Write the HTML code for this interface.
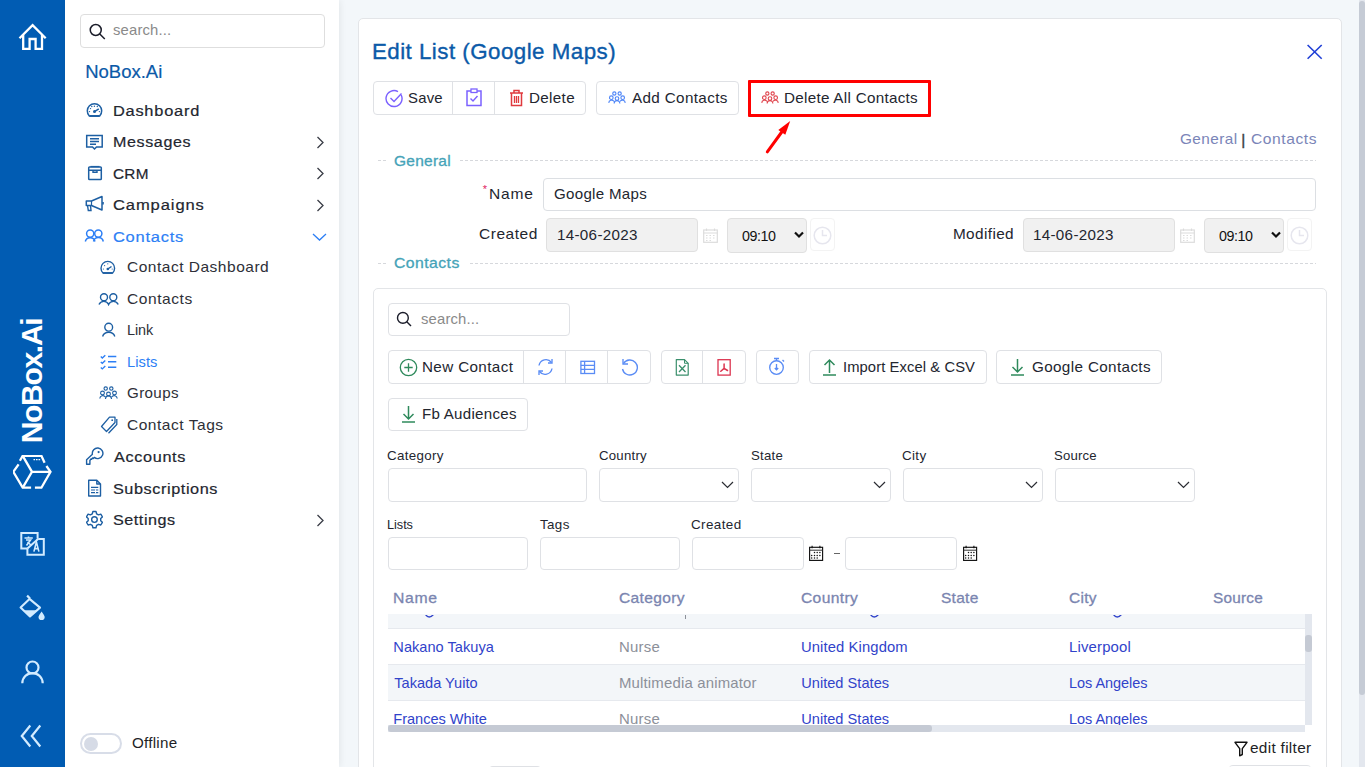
<!DOCTYPE html><html><head><meta charset="utf-8"><style>
html,body{margin:0;padding:0;width:1365px;height:767px;overflow:hidden;background:#f3f7fa;}
body{position:relative;font-family:"Liberation Sans",sans-serif;}
.t{position:absolute;white-space:nowrap;}
.b{position:absolute;}
</style></head><body>
<div class="b" style="left:0px;top:0px;width:65px;height:767px;background:#015cb3"></div>
<div class="b" style="left:65px;top:0px;width:274px;height:767px;background:#fff;box-shadow:1px 0 7px rgba(0,0,0,0.07)"></div>
<div class="b" style="left:1359px;top:0px;width:6px;height:767px;background:#e3e7ee"></div>
<div class="b" style="left:1359px;top:1px;width:6px;height:694px;background:#c5cbd5;border-radius:3px"></div>
<svg class="b" style="left:17px;top:22px;" width="31" height="30" viewBox="0 0 31 30" fill="none"><path d="M2.5 16.2 L15.6 3.2 L28.7 16.2 M6.2 12.8 V26.8 H12.6 V17 H18.6 V26.8 H25 V12.8" stroke="#fff" stroke-width="2.3" stroke-linejoin="miter"/></svg>
<div class="t" style="left:31.5px;top:380.5px;font-size:30px;line-height:30px;color:#fff;font-weight:bold;transform:translate(-50%,-50%) rotate(-90deg);letter-spacing:-1.3px;white-space:nowrap">NoBox.Ai</div>
<svg class="b" style="left:13px;top:455px;" width="39" height="34" viewBox="0 0 39 34" fill="none"><path d="M6.9 5.8 L9.7 0.8 H28.4 L31.6 7.7 M33.4 11 L37.5 16.8 L28.4 32.7 H21.9 M18.1 32.7 H9.7 L0.3 16.8 L5.6 9.3" stroke="#fff" stroke-width="2.3" stroke-linejoin="miter"/><path d="M9.7 0.8 L19 16.8 L9.7 32.7 M19 16.8 H37.5" stroke="#fff" stroke-width="2.3"/><path d="M20.5 4.6 h1.6 M23 4.6 h1.6 M25.5 4.6 h1.6" stroke="#fff" stroke-width="1.3"/></svg>
<svg class="b" style="left:19px;top:531px;" width="27" height="26" viewBox="0 0 27 26" fill="none"><path d="M8.6 17.5 H2.3 V2.1 H18.6 V7.6" stroke="#d2ebff" stroke-width="2"/><path d="M19.4 8 H24.8 V23.8 H8.4 V17.5" stroke="#d2ebff" stroke-width="2"/><path d="M8.4 17.5 L19.6 7.6" stroke="#d2ebff" stroke-width="2"/><path d="M5.5 7 H13.8 M9.5 5.5 V7 M7 9 L11.5 9 L7.5 14.5 M8.5 11 L12.5 14.5" stroke="#d2ebff" stroke-width="1.6"/><path d="M14.9 20.6 L17.4 11 L19.9 20.6 M15.8 17.6 H19" stroke="#d2ebff" stroke-width="1.6"/></svg>
<svg class="b" style="left:19px;top:594px;" width="28" height="28" viewBox="0 0 28 28" fill="none"><path d="M8.1 1.6 L11 4.5" stroke="#d2ebff" stroke-width="2.2"/><path d="M10.5 4.9 L21 13.6 L11 22.5 L1.6 13.4 Z" stroke="#d2ebff" stroke-width="2.1" stroke-linejoin="round"/><path d="M4.2 16.2 L18 16.2 L11 22.5 Z" fill="#d2ebff"/><path d="M22.6 17.4 C20.5 20.5 19.5 22 19.5 23 A3.1 3.1 0 0 0 25.7 23 C25.7 22 24.7 20.5 22.6 17.4Z" fill="#d2ebff"/></svg>
<svg class="b" style="left:21px;top:660px;" width="23" height="24" viewBox="0 0 23 24" fill="none"><circle cx="11.5" cy="7.5" r="6" stroke="#d2ebff" stroke-width="2.2"/><path d="M1.3 23.3 A10.2 10.2 0 0 1 21.7 23.3" stroke="#d2ebff" stroke-width="2.2"/></svg>
<svg class="b" style="left:20px;top:724px;" width="23" height="24" viewBox="0 0 23 24" fill="none"><path d="M10.3 1.5 L1.8 12 L10.3 22.5 M20.3 1.5 L11.8 12 L20.3 22.5" stroke="#d2ebff" stroke-width="2.2"/></svg>
<div class="b" style="left:80px;top:14px;width:245px;height:34px;border:1px solid #dedede;border-radius:4px;box-sizing:border-box;background:#fff"></div>
<svg class="b" style="left:88px;top:22px;" width="20" height="20" viewBox="0 0 20 20" fill="none"><circle cx="7.75" cy="8" r="5.5" stroke="#1b1d2a" stroke-width="1.5"/><path d="M11.8 12 L16.8 17" stroke="#1b1d2a" stroke-width="1.5"/></svg>
<div class="t" style="left:113.36px;top:22.77px;font-size:14.5px;line-height:14.5px;color:#8a8a8a;letter-spacing:0.153px;transform:scaleX(1.0233);transform-origin:0.43px 0;">search...</div>
<div class="t" style="left:85.22px;top:62.54px;font-size:18.5px;line-height:18.5px;color:#0b5aa8;letter-spacing:-0.005px;-webkit-text-stroke:0.2px #0b5aa8;">NoBox.Ai</div>
<div class="t" style="left:112.79px;top:103.22px;font-size:15.1px;line-height:15.1px;color:#23262f;letter-spacing:0.711px;transform:scaleX(1.0862);transform-origin:1.21px 0;-webkit-text-stroke:0.2px #23262f;">Dashboard</div>
<div class="t" style="left:112.79px;top:134.12px;font-size:15.1px;line-height:15.1px;color:#23262f;letter-spacing:0.589px;transform:scaleX(1.0654);transform-origin:1.21px 0;-webkit-text-stroke:0.2px #23262f;">Messages</div>
<div class="t" style="left:113.25px;top:166.12px;font-size:15.1px;line-height:15.1px;color:#23262f;letter-spacing:0.249px;transform:scaleX(1.0156);transform-origin:0.76px 0;-webkit-text-stroke:0.2px #23262f;">CRM</div>
<div class="t" style="left:113.25px;top:197.02px;font-size:15.1px;line-height:15.1px;color:#23262f;letter-spacing:0.825px;transform:scaleX(1.0964);transform-origin:0.76px 0;-webkit-text-stroke:0.2px #23262f;">Campaigns</div>
<div class="t" style="left:113.25px;top:228.82px;font-size:15.1px;line-height:15.1px;color:#2d7ff5;letter-spacing:0.701px;transform:scaleX(1.0919);transform-origin:0.76px 0;-webkit-text-stroke:0.2px #2d7ff5;">Contacts</div>
<div class="t" style="left:126.97px;top:259.94px;font-size:14.6px;line-height:14.6px;color:#2e3038;letter-spacing:0.467px;transform:scaleX(1.0641);transform-origin:0.73px 0;">Contact Dashboard</div>
<div class="t" style="left:126.97px;top:291.64px;font-size:14.6px;line-height:14.6px;color:#2e3038;letter-spacing:0.505px;transform:scaleX(1.0669);transform-origin:0.73px 0;">Contacts</div>
<div class="t" style="left:126.53px;top:323.14px;font-size:14.6px;line-height:14.6px;color:#2e3038;letter-spacing:-0.105px;transform:scaleX(0.9878);transform-origin:1.17px 0;">Link</div>
<div class="t" style="left:126.53px;top:354.64px;font-size:14.6px;line-height:14.6px;color:#2d7ff5;letter-spacing:0.047px;transform:scaleX(1.0066);transform-origin:1.17px 0;">Lists</div>
<div class="t" style="left:126.97px;top:385.84px;font-size:14.6px;line-height:14.6px;color:#2e3038;letter-spacing:0.352px;transform:scaleX(1.0392);transform-origin:0.73px 0;">Groups</div>
<div class="t" style="left:126.97px;top:417.64px;font-size:14.6px;line-height:14.6px;color:#2e3038;letter-spacing:0.476px;transform:scaleX(1.0667);transform-origin:0.73px 0;">Contact Tags</div>
<div class="t" style="left:114.00px;top:449.22px;font-size:15.1px;line-height:15.1px;color:#23262f;letter-spacing:0.617px;transform:scaleX(1.0754);transform-origin:0.00px 0;-webkit-text-stroke:0.2px #23262f;">Accounts</div>
<div class="t" style="left:113.32px;top:480.92px;font-size:15.1px;line-height:15.1px;color:#23262f;letter-spacing:0.535px;transform:scaleX(1.0773);transform-origin:0.68px 0;-webkit-text-stroke:0.2px #23262f;">Subscriptions</div>
<div class="t" style="left:113.32px;top:511.72px;font-size:15.1px;line-height:15.1px;color:#23262f;letter-spacing:0.508px;transform:scaleX(1.0714);transform-origin:0.68px 0;-webkit-text-stroke:0.2px #23262f;">Settings</div>
<svg class="b" style="left:315px;top:135.5px;" width="10" height="13" viewBox="0 0 10 13" fill="none"><path d="M2.5 1 L8 6.5 L2.5 12" stroke="#3a3d46" stroke-width="1.3"/></svg>
<svg class="b" style="left:315px;top:167px;" width="10" height="13" viewBox="0 0 10 13" fill="none"><path d="M2.5 1 L8 6.5 L2.5 12" stroke="#3a3d46" stroke-width="1.3"/></svg>
<svg class="b" style="left:315px;top:198.5px;" width="10" height="13" viewBox="0 0 10 13" fill="none"><path d="M2.5 1 L8 6.5 L2.5 12" stroke="#3a3d46" stroke-width="1.3"/></svg>
<svg class="b" style="left:315px;top:513.5px;" width="10" height="13" viewBox="0 0 10 13" fill="none"><path d="M2.5 1 L8 6.5 L2.5 12" stroke="#3a3d46" stroke-width="1.3"/></svg>
<svg class="b" style="left:312px;top:232px;" width="15" height="10" viewBox="0 0 15 10" fill="none"><path d="M1 2 L7.5 8 L14 2" stroke="#2d7ff5" stroke-width="1.3"/></svg>
<svg class="b" style="left:86px;top:102px;" width="18" height="16" viewBox="0 0 18 16" fill="none"><path d="M3.3 13.9 A7.2 7.2 0 1 1 13.7 13.9 Z" stroke="#1d5fa3" stroke-width="1.5"/><path d="M3.5 14 H13.5" stroke="#1d5fa3" stroke-width="1.9"/><path d="M8.5 9.6 L12.8 6.9" stroke="#1d5fa3" stroke-width="1.6"/><circle cx="8.5" cy="9.6" r="1.5" fill="#1d5fa3"/><circle cx="3.5" cy="9.6" r=".7" fill="#1d5fa3"/><circle cx="4.5" cy="6.6" r=".7" fill="#1d5fa3"/><circle cx="5.8" cy="4.5" r=".7" fill="#1d5fa3"/><circle cx="8.4" cy="4.3" r=".7" fill="#1d5fa3"/><circle cx="11.3" cy="4.5" r=".7" fill="#1d5fa3"/><circle cx="13.4" cy="9.6" r=".7" fill="#1d5fa3"/></svg>
<svg class="b" style="left:85px;top:134px;" width="19" height="17" viewBox="0 0 19 17" fill="none"><path d="M1.7 1.5 H17.2 V13 H11.5 L9.5 15 L7.5 13 H1.7 Z" stroke="#1d5fa3" stroke-width="1.5"/><path d="M5 4.8 H14 M5 7.5 H14 M5 10.2 H11" stroke="#1d5fa3" stroke-width="1.4"/></svg>
<svg class="b" style="left:87px;top:165px;" width="16" height="16" viewBox="0 0 16 16" fill="none"><rect x="1.7" y="2" width="12.6" height="12.5" rx=".8" stroke="#1d5fa3" stroke-width="1.5"/><path d="M1.7 5.3 H14.3 M6 5.3 V7.3 H10 V5.3" stroke="#1d5fa3" stroke-width="1.4"/><path d="M3.5 1.5 H12.5" stroke="#1d5fa3" stroke-width="1.2"/></svg>
<svg class="b" style="left:85px;top:195px;" width="19" height="17" viewBox="0 0 19 17" fill="none"><path d="M1.3 6 H6.5 L17 1.5 V15 L6.5 10.5 H1.3 Z" stroke="#1d5fa3" stroke-width="1.5" stroke-linejoin="round"/><path d="M6.5 6 V10.5" stroke="#1d5fa3" stroke-width="1.2"/><path d="M2.5 10.5 L3.3 15.5 H6 L5.5 10.5" stroke="#1d5fa3" stroke-width="1.4"/><path d="M18 7 v2.5" stroke="#1d5fa3" stroke-width="1.6"/></svg>
<svg class="b" style="left:84px;top:229px;" width="21" height="14" viewBox="0 0 21 14" fill="none"><circle cx="6.2" cy="4.6" r="3.6" stroke="#2d7ff5" stroke-width="1.5"/><circle cx="14.3" cy="4.6" r="3.6" stroke="#2d7ff5" stroke-width="1.5"/><path d="M1.3 12.5 A5 5 0 0 1 11 12.5 M9.5 12.5 A5 5 0 0 1 19.3 12.5" stroke="#2d7ff5" stroke-width="1.5"/></svg>
<svg class="b" style="left:100px;top:260px;" width="16" height="15" viewBox="0 0 16 15" fill="none"><path d="M3 13 A6.8 6.8 0 1 1 12.6 13 Z" stroke="#1d5fa3" stroke-width="1.4"/><path d="M3 13 H12.6" stroke="#1d5fa3" stroke-width="1.7"/><path d="M7.8 9 L11.5 6.5" stroke="#1d5fa3" stroke-width="1.5"/><circle cx="7.8" cy="9" r="1.3" fill="#1d5fa3"/><circle cx="3.4" cy="9" r=".6" fill="#1d5fa3"/><circle cx="4.6" cy="5.6" r=".6" fill="#1d5fa3"/><circle cx="7.8" cy="3.8" r=".6" fill="#1d5fa3"/><circle cx="12.2" cy="9" r=".6" fill="#1d5fa3"/></svg>
<svg class="b" style="left:98px;top:292px;" width="21" height="14" viewBox="0 0 21 14" fill="none"><circle cx="6" cy="5.2" r="3.5" stroke="#1d5fa3" stroke-width="1.4"/><circle cx="15.3" cy="5.2" r="3.5" stroke="#1d5fa3" stroke-width="1.4"/><path d="M1 12.6 A5.2 5.2 0 0 1 10.6 12.6 A5.2 5.2 0 0 1 20.2 12.6" stroke="#1d5fa3" stroke-width="1.4"/></svg>
<svg class="b" style="left:101px;top:322px;" width="16" height="16" viewBox="0 0 16 16" fill="none"><circle cx="7.7" cy="5.2" r="3.9" stroke="#1d5fa3" stroke-width="1.4"/><path d="M1.6 14.5 A6.4 6 0 0 1 13.8 14.5" stroke="#1d5fa3" stroke-width="1.4"/></svg>
<svg class="b" style="left:99px;top:354px;" width="18" height="16" viewBox="0 0 18 16" fill="none"><path d="M1.8 2.6 L3.3 4 L6.3 1.2 M1.8 7.9 L3.3 9.3 L6.3 6.5 M1.8 13.5 L3.3 14.9 L6.3 12.1" stroke="#2d7ff5" stroke-width="1.4"/><path d="M9 2.4 H17.3 M9 7.7 H17.3 M9 13.3 H17.3" stroke="#2d7ff5" stroke-width="1.5"/></svg>
<svg class="b" style="left:99px;top:386px;" width="19" height="14" viewBox="0 0 19 14" fill="none"><circle cx="6.7" cy="2.6" r="1.7" stroke="#1d5fa3" stroke-width="1.1"/><circle cx="12.3" cy="2.6" r="1.7" stroke="#1d5fa3" stroke-width="1.1"/><circle cx="3.5" cy="7" r="1.9" stroke="#1d5fa3" stroke-width="1.1"/><circle cx="9.5" cy="8" r="1.9" stroke="#1d5fa3" stroke-width="1.1"/><circle cx="15.5" cy="7" r="1.9" stroke="#1d5fa3" stroke-width="1.1"/><path d="M0.8 12.5 A3 3 0 0 1 6.3 11 M12.7 11 A3 3 0 0 1 18.2 12.5 M6.5 13 A3 3.2 0 0 1 12.5 13" stroke="#1d5fa3" stroke-width="1.2"/></svg>
<svg class="b" style="left:100px;top:416px;" width="18" height="18" viewBox="0 0 18 18" fill="none"><path d="M1.5 10.5 L9.5 1.2 H15 V6.5 L6.5 15.5 Z" stroke="#1d5fa3" stroke-width="1.3" stroke-linejoin="round"/><path d="M16.8 3 V8.5 L8.5 17.3" stroke="#1d5fa3" stroke-width="1.3"/><circle cx="12.2" cy="4.2" r=".9" fill="#1d5fa3"/></svg>
<svg class="b" style="left:85px;top:446px;" width="19" height="20" viewBox="0 0 19 20" fill="none"><path d="M7.4 8.3 A5.3 5.3 0 1 1 9.25 11.4 L8.3 12.4 L7.6 11.9 L6.6 13.3 L6 12.9 L4.9 14.5 V18.2 H1.6 V13.8 Z" stroke="#1d5fa3" stroke-width="1.4" stroke-linejoin="round"/><circle cx="13.6" cy="6.1" r="1.1" fill="#1d5fa3"/></svg>
<svg class="b" style="left:87px;top:479px;" width="15" height="18" viewBox="0 0 15 18" fill="none"><path d="M1.7 1.2 H9.8 L13.5 5 V17 H1.7 Z M9.8 1.2 V5 H13.5" stroke="#1d5fa3" stroke-width="1.4" stroke-linejoin="round"/><path d="M4 8.3 H11.3 M4 11 H11.3 M4 13.7 H11.3" stroke="#1d5fa3" stroke-width="1.2"/><path d="M8.5 10.2 V14.5" stroke="#fff" stroke-width="1"/></svg>
<svg class="b" style="left:86px;top:510px;" width="17" height="19" viewBox="0 0 17 19" fill="none"><path d="M6.9 1.5 h3.1 l.6 2.3 l1.9 1.1 l2.3 -.7 l1.6 2.7 l-1.7 1.6 v2.2 l1.7 1.6 l-1.6 2.7 l-2.3 -.7 l-1.9 1.1 l-.6 2.3 h-3.1 l-.6 -2.3 l-1.9 -1.1 l-2.3 .7 l-1.6 -2.7 l1.7 -1.6 v-2.2 l-1.7 -1.6 l1.6 -2.7 l2.3 .7 l1.9 -1.1 z" stroke="#1d5fa3" stroke-width="1.4" stroke-linejoin="round"/><circle cx="8.45" cy="9.6" r="2.8" stroke="#1d5fa3" stroke-width="1.4"/></svg>
<div class="b" style="left:80px;top:733px;width:42px;height:21px;border:2.4px solid #d8dde8;border-radius:11px;box-sizing:border-box;background:#fff"></div>
<div class="b" style="left:84px;top:737px;width:14px;height:14px;background:#d6dbe6;border-radius:50%"></div>
<div class="t" style="left:131.94px;top:735.64px;font-size:14.6px;line-height:14.6px;color:#1e1f26;letter-spacing:0.257px;transform:scaleX(1.0396);transform-origin:0.66px 0;">Offline</div>
<div class="b" style="left:358px;top:18px;width:984px;height:760px;background:#fff;border:1px solid #e3e5e8;border-radius:5px;box-sizing:border-box"></div>
<div class="t" style="left:372.10px;top:41.67px;font-size:21.3px;line-height:21.3px;color:#0b5aa8;letter-spacing:0.456px;transform:scaleX(1.0478);transform-origin:1.70px 0;-webkit-text-stroke:0.35px #0b5aa8;">Edit List (Google Maps)</div>
<svg class="b" style="left:1305px;top:42px;" width="19" height="19" viewBox="0 0 19 19" fill="none"><path d="M2.6 3 L16.7 16.8 M16.7 3 L2.6 16.8" stroke="#1f3fd6" stroke-width="1.6"/></svg>
<div class="b" style="left:373px;top:81px;width:213px;height:34px;border:1px solid #dfe1e5;border-radius:4px;box-sizing:border-box;background:#fff;"></div>
<div class="b" style="left:452px;top:81px;width:1px;height:34px;background:#dfe1e5"></div>
<div class="b" style="left:494px;top:81px;width:1px;height:34px;background:#dfe1e5"></div>
<svg class="b" style="left:384.7px;top:88.5px;" width="19" height="19" viewBox="0 0 19 19" fill="none"><path d="M16.2 6 A8 8 0 1 1 13 2.6" stroke="#7b61ff" stroke-width="1.4"/><path d="M5.5 9 L9 12.5 L16.5 4.5" stroke="#7b61ff" stroke-width="1.4"/></svg>
<div class="t" style="left:407.94px;top:90.94px;font-size:14.6px;line-height:14.6px;color:#23262f;letter-spacing:0.217px;transform:scaleX(1.0207);transform-origin:0.66px 0;">Save</div>
<svg class="b" style="left:466px;top:88px;" width="16" height="19" viewBox="0 0 16 19" fill="none"><path d="M5 3 H1 V17.5 H15 V3 H11" stroke="#7b61ff" stroke-width="1.5"/><rect x="5" y="1" width="6" height="3.5" stroke="#7b61ff" stroke-width="1.3"/><path d="M4.5 10.5 L7 13 L11.5 8" stroke="#7b61ff" stroke-width="1.4"/></svg>
<svg class="b" style="left:509px;top:89px;" width="15" height="18" viewBox="0 0 15 18" fill="none"><path d="M1 4 H14 M5 4 V1.5 H10 V4" stroke="#e03a3e" stroke-width="1.5"/><path d="M2.5 4 V16.5 H12.5 V4" stroke="#e03a3e" stroke-width="1.5"/><path d="M5.5 7 V14 M7.5 7 V14 M9.5 7 V14" stroke="#e03a3e" stroke-width="1.3"/></svg>
<div class="t" style="left:529.33px;top:90.94px;font-size:14.6px;line-height:14.6px;color:#23262f;letter-spacing:0.329px;transform:scaleX(1.0425);transform-origin:1.17px 0;">Delete</div>
<div class="b" style="left:596px;top:81px;width:143px;height:34px;border:1px solid #dfe1e5;border-radius:4px;box-sizing:border-box;background:#fff;"></div>
<svg class="b" style="left:608px;top:91.3px" width="18" height="13.3" viewBox="0 0 19 14" fill="none"><circle cx="6.7" cy="2.6" r="1.7" stroke="#4f86f7" stroke-width="1.2"/><circle cx="12.3" cy="2.6" r="1.7" stroke="#4f86f7" stroke-width="1.2"/><circle cx="3.5" cy="7" r="1.9" stroke="#4f86f7" stroke-width="1.2"/><circle cx="9.5" cy="8" r="1.9" stroke="#4f86f7" stroke-width="1.2"/><circle cx="15.5" cy="7" r="1.9" stroke="#4f86f7" stroke-width="1.2"/><path d="M0.8 12.5 A3 3 0 0 1 6.3 11 M12.7 11 A3 3 0 0 1 18.2 12.5 M6.5 13.3 A3 3.2 0 0 1 12.5 13.3" stroke="#4f86f7" stroke-width="1.2"/></svg>
<div class="t" style="left:632.30px;top:90.94px;font-size:14.6px;line-height:14.6px;color:#23262f;letter-spacing:0.337px;transform:scaleX(1.0444);transform-origin:0.00px 0;">Add Contacts</div>
<div class="b" style="left:748px;top:80px;width:183px;height:37px;border:3px solid #ff0000;box-sizing:border-box;border-radius:1px"></div>
<svg class="b" style="left:761px;top:91.3px" width="18" height="13.3" viewBox="0 0 19 14" fill="none"><circle cx="6.7" cy="2.6" r="1.7" stroke="#e0464f" stroke-width="1.2"/><circle cx="12.3" cy="2.6" r="1.7" stroke="#e0464f" stroke-width="1.2"/><circle cx="3.5" cy="7" r="1.9" stroke="#e0464f" stroke-width="1.2"/><circle cx="9.5" cy="8" r="1.9" stroke="#e0464f" stroke-width="1.2"/><circle cx="15.5" cy="7" r="1.9" stroke="#e0464f" stroke-width="1.2"/><path d="M0.8 12.5 A3 3 0 0 1 6.3 11 M12.7 11 A3 3 0 0 1 18.2 12.5 M6.5 13.3 A3 3.2 0 0 1 12.5 13.3" stroke="#e0464f" stroke-width="1.2"/></svg>
<div class="t" style="left:783.73px;top:90.94px;font-size:14.6px;line-height:14.6px;color:#23262f;letter-spacing:0.277px;transform:scaleX(1.0428);transform-origin:1.17px 0;">Delete All Contacts</div>
<svg class="b" style="left:760px;top:117px;" width="36" height="40" viewBox="0 0 36 40" fill="none"><path d="M7.3 34.8 L22.5 14" stroke="#ff0000" stroke-width="3" stroke-linecap="round"/><path d="M30.2 4.1 L18.3 12.9 L25.3 17.8 Z" fill="#ff0000"/></svg>
<div class="t" style="left:1179.97px;top:131.84px;font-size:14.6px;line-height:14.6px;color:#7a85b8;letter-spacing:0.403px;transform:scaleX(1.0505);transform-origin:0.73px 0;">General</div>
<div class="t" style="left:1241.31px;top:131.88px;font-size:15.5px;line-height:15.5px;color:#3a3c44;letter-spacing:0.000px;-webkit-text-stroke:0.4px #3a3c44;">|</div>
<div class="t" style="left:1250.77px;top:131.84px;font-size:14.6px;line-height:14.6px;color:#7a85b8;letter-spacing:0.530px;transform:scaleX(1.0705);transform-origin:0.73px 0;">Contacts</div>
<div class="b" style="left:378px;top:160px;width:8px;height:1px;background-image:linear-gradient(to right,#d6d8dc 60%,transparent 60%);background-size:5px 1px"></div>
<div class="b" style="left:460px;top:160px;width:856px;height:1px;background-image:linear-gradient(to right,#d6d8dc 60%,transparent 60%);background-size:5px 1px"></div>
<div class="t" style="left:394.15px;top:152.70px;font-size:15px;line-height:15px;color:#45a3b8;letter-spacing:0.266px;transform:scaleX(1.0320);transform-origin:0.75px 0;-webkit-text-stroke:0.3px #45a3b8;">General</div>
<div class="b" style="left:378px;top:263px;width:8px;height:1px;background-image:linear-gradient(to right,#d6d8dc 60%,transparent 60%);background-size:5px 1px"></div>
<div class="b" style="left:470px;top:263px;width:846px;height:1px;background-image:linear-gradient(to right,#d6d8dc 60%,transparent 60%);background-size:5px 1px"></div>
<div class="t" style="left:394.25px;top:255.30px;font-size:15px;line-height:15px;color:#45a3b8;letter-spacing:0.414px;transform:scaleX(1.0527);transform-origin:0.75px 0;-webkit-text-stroke:0.3px #45a3b8;">Contacts</div>
<div class="t" style="left:482.83px;top:183.69px;font-size:11px;line-height:11px;color:#e0245e;letter-spacing:0.000px;">*</div>
<div class="t" style="left:489.23px;top:186.84px;font-size:14.6px;line-height:14.6px;color:#23262f;letter-spacing:0.783px;transform:scaleX(1.0676);transform-origin:1.17px 0;">Name</div>
<div class="b" style="left:543px;top:178px;width:773px;height:33px;border:1px solid #dcdfe3;border-radius:4px;box-sizing:border-box;background:#fff"></div>
<div class="t" style="left:553.77px;top:187.14px;font-size:14.6px;line-height:14.6px;color:#23262f;letter-spacing:0.284px;transform:scaleX(1.0343);transform-origin:0.73px 0;">Google Maps</div>
<div class="t" style="left:478.57px;top:226.84px;font-size:14.6px;line-height:14.6px;color:#23262f;letter-spacing:0.500px;transform:scaleX(1.0635);transform-origin:0.73px 0;">Created</div>
<div class="b" style="left:546px;top:218px;width:152px;height:34px;border:1px solid #e0e0e0;border-radius:4px;box-sizing:border-box;background:#f1f1f1"></div>
<div class="t" style="left:556.80px;top:228.14px;font-size:14.6px;line-height:14.6px;color:#23262f;letter-spacing:0.310px;transform:scaleX(1.0397);transform-origin:1.09px 0;">14-06-2023</div>
<svg class="b" style="left:703px;top:228px;" width="15" height="15" viewBox="0 0 15 15" fill="none"><rect x="0.7" y="2" width="13.6" height="12.3" stroke="#dcdcdc" stroke-width="1.2"/><path d="M0.7 5 H14.3 M3.5 0.5 V3 M11.5 0.5 V3" stroke="#dcdcdc" stroke-width="1.2"/><path d="M3 7.5 h1.5 M6.5 7.5 h1.5 M10 7.5 h1.5 M3 10 h1.5 M6.5 10 h1.5 M10 10 h1.5 M3 12.5 h1.5 M6.5 12.5 h1.5" stroke="#dcdcdc" stroke-width="1.2"/></svg>
<div class="b" style="left:727px;top:218px;width:80px;height:35px;border:1px solid #e0e0e0;border-radius:4px;box-sizing:border-box;background:#f1f1f1"></div>
<div class="t" style="left:742.20px;top:227.80px;font-size:15px;line-height:15px;color:#111;letter-spacing:-0.470px;transform:scaleX(0.9509);transform-origin:0.60px 0;">09:10</div>
<svg class="b" style="left:794px;top:231px;" width="10" height="8" viewBox="0 0 10 8" fill="none"><path d="M1 1.5 L5 5.5 L9 1.5" stroke="#111" stroke-width="2.2"/></svg>
<div class="b" style="left:810px;top:218px;width:25px;height:33px;border:1px solid #f3f3f3;border-radius:4px;box-sizing:border-box"></div>
<svg class="b" style="left:813px;top:226px;" width="19" height="19" viewBox="0 0 19 19" fill="none"><circle cx="9.5" cy="9.5" r="8.3" stroke="#e6e6ee" stroke-width="1.5"/><path d="M9.5 4 V9.5 H14" stroke="#e6e6ee" stroke-width="1.5"/></svg>
<div class="t" style="left:952.83px;top:226.84px;font-size:14.6px;line-height:14.6px;color:#23262f;letter-spacing:0.369px;transform:scaleX(1.0511);transform-origin:1.17px 0;">Modified</div>
<div class="b" style="left:1023px;top:218px;width:152px;height:34px;border:1px solid #e0e0e0;border-radius:4px;box-sizing:border-box;background:#f1f1f1"></div>
<div class="t" style="left:1033.40px;top:228.14px;font-size:14.6px;line-height:14.6px;color:#23262f;letter-spacing:0.310px;transform:scaleX(1.0397);transform-origin:1.09px 0;">14-06-2023</div>
<svg class="b" style="left:1180px;top:228px;" width="15" height="15" viewBox="0 0 15 15" fill="none"><rect x="0.7" y="2" width="13.6" height="12.3" stroke="#dcdcdc" stroke-width="1.2"/><path d="M0.7 5 H14.3 M3.5 0.5 V3 M11.5 0.5 V3" stroke="#dcdcdc" stroke-width="1.2"/><path d="M3 7.5 h1.5 M6.5 7.5 h1.5 M10 7.5 h1.5 M3 10 h1.5 M6.5 10 h1.5 M10 10 h1.5 M3 12.5 h1.5 M6.5 12.5 h1.5" stroke="#dcdcdc" stroke-width="1.2"/></svg>
<div class="b" style="left:1204px;top:218px;width:80px;height:35px;border:1px solid #e0e0e0;border-radius:4px;box-sizing:border-box;background:#f1f1f1"></div>
<div class="t" style="left:1219.20px;top:227.80px;font-size:15px;line-height:15px;color:#111;letter-spacing:-0.470px;transform:scaleX(0.9509);transform-origin:0.60px 0;">09:10</div>
<svg class="b" style="left:1271px;top:231px;" width="10" height="8" viewBox="0 0 10 8" fill="none"><path d="M1 1.5 L5 5.5 L9 1.5" stroke="#111" stroke-width="2.2"/></svg>
<div class="b" style="left:1287px;top:218px;width:25px;height:33px;border:1px solid #f3f3f3;border-radius:4px;box-sizing:border-box"></div>
<svg class="b" style="left:1290px;top:226px;" width="19" height="19" viewBox="0 0 19 19" fill="none"><circle cx="9.5" cy="9.5" r="8.3" stroke="#e6e6ee" stroke-width="1.5"/><path d="M9.5 4 V9.5 H14" stroke="#e6e6ee" stroke-width="1.5"/></svg>
<div class="b" style="left:373px;top:288px;width:954px;height:500px;border:1px solid #e3e5e8;border-radius:5px;box-sizing:border-box;background:#fff"></div>
<div class="b" style="left:388px;top:303px;width:182px;height:33px;border:1px solid #dfe1e5;border-radius:4px;box-sizing:border-box"></div>
<svg class="b" style="left:396px;top:311px;" width="17" height="17" viewBox="0 0 17 17" fill="none"><circle cx="6.9" cy="6.9" r="5.4" stroke="#1b1d2a" stroke-width="1.4"/><path d="M10.8 10.8 L15 15" stroke="#1b1d2a" stroke-width="1.4"/></svg>
<div class="t" style="left:420.87px;top:312.22px;font-size:14.5px;line-height:14.5px;color:#8a8a8a;letter-spacing:0.153px;transform:scaleX(1.0233);transform-origin:0.43px 0;">search...</div>
<div class="b" style="left:388px;top:350px;width:263px;height:34px;border:1px solid #dfe1e5;border-radius:4px;box-sizing:border-box;background:#fff;"></div>
<div class="b" style="left:523px;top:350px;width:1px;height:34px;background:#dfe1e5"></div>
<div class="b" style="left:565px;top:350px;width:1px;height:34px;background:#dfe1e5"></div>
<div class="b" style="left:607px;top:350px;width:1px;height:34px;background:#dfe1e5"></div>
<svg class="b" style="left:399px;top:358px;" width="19" height="19" viewBox="0 0 19 19" fill="none"><circle cx="9.5" cy="9.5" r="8.2" stroke="#2f8a5c" stroke-width="1.3"/><path d="M9.5 5.3 V13.7 M5.3 9.5 H13.7" stroke="#2f8a5c" stroke-width="1.3"/></svg>
<div class="t" style="left:422.23px;top:359.84px;font-size:14.6px;line-height:14.6px;color:#23262f;letter-spacing:0.351px;transform:scaleX(1.0445);transform-origin:1.17px 0;">New Contact</div>
<svg class="b" style="left:537px;top:358px;" width="17" height="18" viewBox="0 0 17 18" fill="none"><path d="M2 7.5 A7 7 0 0 1 14.5 4.5 M15 10.5 A7 7 0 0 1 2.5 13.5" stroke="#5a8cf5" stroke-width="1.35"/><path d="M15 1 V5 H11 M2 17 V13 H6" stroke="#5a8cf5" stroke-width="1.35"/></svg>
<svg class="b" style="left:579px;top:359px;" width="17" height="16" viewBox="0 0 17 16" fill="none"><rect x="1.9" y="2.3" width="13.6" height="12.2" stroke="#5a8cf5" stroke-width="1.3"/><path d="M1.9 6.3 H15.5 M1.9 10.4 H15.5 M5.6 2.3 V14.5" stroke="#5a8cf5" stroke-width="1.3"/></svg>
<svg class="b" style="left:620px;top:358px;" width="19" height="18" viewBox="0 0 19 18" fill="none"><path d="M3.5 5.5 A7.5 7.5 0 1 1 2.5 11" stroke="#5a8cf5" stroke-width="1.35"/><path d="M3 1 V6 H8" stroke="#5a8cf5" stroke-width="1.35"/></svg>
<div class="b" style="left:661px;top:350px;width:85px;height:34px;border:1px solid #dfe1e5;border-radius:4px;box-sizing:border-box;background:#fff;"></div>
<div class="b" style="left:702px;top:350px;width:1px;height:34px;background:#dfe1e5"></div>
<svg class="b" style="left:674px;top:358px;" width="16" height="19" viewBox="0 0 16 19" fill="none"><path d="M2.3 1.6 H10.5 L14.2 5.3 V17.1 H2.3 Z" stroke="#3a8f6c" stroke-width="1.2" stroke-linejoin="round"/><path d="M10.5 1.6 V5.3 H14.2" stroke="#3a8f6c" stroke-width="1"/><path d="M5 7.2 L11.5 14 M11.5 7.2 L5 14" stroke="#3a8f6c" stroke-width="1.3"/></svg>
<svg class="b" style="left:716px;top:358px;" width="16" height="19" viewBox="0 0 16 19" fill="none"><rect x="2" y="1.7" width="12.2" height="15.4" stroke="#dc3550" stroke-width="1.3"/><path d="M8.1 6 V10.3 L4.8 13.2 M8.1 10.3 L11.5 12.5" stroke="#dc3550" stroke-width="1.5" stroke-linecap="round"/></svg>
<div class="b" style="left:756px;top:350px;width:43px;height:34px;border:1px solid #dfe1e5;border-radius:4px;box-sizing:border-box;background:#fff;"></div>
<svg class="b" style="left:768px;top:357px;" width="18" height="19" viewBox="0 0 18 19" fill="none"><circle cx="8.5" cy="10.5" r="6.8" stroke="#5a8cf5" stroke-width="1.35"/><path d="M6 1.5 H11 M8.5 1.5 V3.7 M14.5 3 L16 4.5" stroke="#5a8cf5" stroke-width="1.35"/><path d="M8.5 7 V12.5 M6.8 11 L8.5 12.8 L10.2 11" stroke="#5a8cf5" stroke-width="1.3"/></svg>
<div class="b" style="left:809px;top:350px;width:178px;height:34px;border:1px solid #dfe1e5;border-radius:4px;box-sizing:border-box;background:#fff;"></div>
<svg class="b" style="left:822px;top:358px;" width="15" height="18" viewBox="0 0 15 18" fill="none"><path d="M7.5 15 V2 M2.5 7 L7.5 2 L12.5 7 M1 17 H14" stroke="#2f8a5c" stroke-width="1.5"/></svg>
<div class="t" style="left:842.89px;top:359.84px;font-size:14.6px;line-height:14.6px;color:#23262f;letter-spacing:0.087px;transform:scaleX(1.0117);transform-origin:1.31px 0;">Import Excel & CSV</div>
<div class="b" style="left:996px;top:350px;width:166px;height:34px;border:1px solid #dfe1e5;border-radius:4px;box-sizing:border-box;background:#fff;"></div>
<svg class="b" style="left:1010px;top:358px;" width="15" height="18" viewBox="0 0 15 18" fill="none"><path d="M7.5 1 V14 M2.5 9 L7.5 14 L12.5 9 M1 17 H14" stroke="#2f8a5c" stroke-width="1.5"/></svg>
<div class="t" style="left:1031.57px;top:359.84px;font-size:14.6px;line-height:14.6px;color:#23262f;letter-spacing:0.337px;transform:scaleX(1.0459);transform-origin:0.73px 0;">Google Contacts</div>
<div class="b" style="left:388px;top:398px;width:140px;height:33px;border:1px solid #dfe1e5;border-radius:4px;box-sizing:border-box;background:#fff;"></div>
<svg class="b" style="left:401px;top:405px;" width="15" height="18" viewBox="0 0 15 18" fill="none"><path d="M7.5 1 V14 M2.5 9 L7.5 14 L12.5 9 M1 17 H14" stroke="#2f8a5c" stroke-width="1.5"/></svg>
<div class="t" style="left:422.23px;top:407.14px;font-size:14.6px;line-height:14.6px;color:#23262f;letter-spacing:0.264px;transform:scaleX(1.0346);transform-origin:1.17px 0;">Fb Audiences</div>
<div class="t" style="left:387.16px;top:449.66px;font-size:12.8px;line-height:12.8px;color:#23262f;letter-spacing:0.306px;transform:scaleX(1.0436);transform-origin:0.64px 0;">Category</div>
<div class="t" style="left:598.76px;top:449.66px;font-size:12.8px;line-height:12.8px;color:#23262f;letter-spacing:0.229px;transform:scaleX(1.0322);transform-origin:0.64px 0;">Country</div>
<div class="t" style="left:750.82px;top:449.66px;font-size:12.8px;line-height:12.8px;color:#23262f;letter-spacing:0.226px;transform:scaleX(1.0324);transform-origin:0.58px 0;">State</div>
<div class="t" style="left:901.86px;top:449.66px;font-size:12.8px;line-height:12.8px;color:#23262f;letter-spacing:0.337px;transform:scaleX(1.0497);transform-origin:0.64px 0;">City</div>
<div class="t" style="left:1054.42px;top:449.66px;font-size:12.8px;line-height:12.8px;color:#23262f;letter-spacing:0.199px;transform:scaleX(1.0259);transform-origin:0.58px 0;">Source</div>
<div class="b" style="left:388px;top:468px;width:199px;height:34px;border:1px solid #dfe1e5;border-radius:4px;box-sizing:border-box;background:#fff"></div>
<div class="b" style="left:599px;top:468px;width:140px;height:34px;border:1px solid #dfe1e5;border-radius:4px;box-sizing:border-box;background:#fff"></div>
<svg class="b" style="left:721px;top:481px;" width="13" height="8" viewBox="0 0 13 8" fill="none"><path d="M1 1 L6.5 6.5 L12 1" stroke="#2b2d33" stroke-width="1.2"/></svg>
<div class="b" style="left:751px;top:468px;width:140px;height:34px;border:1px solid #dfe1e5;border-radius:4px;box-sizing:border-box;background:#fff"></div>
<svg class="b" style="left:873px;top:481px;" width="13" height="8" viewBox="0 0 13 8" fill="none"><path d="M1 1 L6.5 6.5 L12 1" stroke="#2b2d33" stroke-width="1.2"/></svg>
<div class="b" style="left:903px;top:468px;width:140px;height:34px;border:1px solid #dfe1e5;border-radius:4px;box-sizing:border-box;background:#fff"></div>
<svg class="b" style="left:1025px;top:481px;" width="13" height="8" viewBox="0 0 13 8" fill="none"><path d="M1 1 L6.5 6.5 L12 1" stroke="#2b2d33" stroke-width="1.2"/></svg>
<div class="b" style="left:1055px;top:468px;width:140px;height:34px;border:1px solid #dfe1e5;border-radius:4px;box-sizing:border-box;background:#fff"></div>
<svg class="b" style="left:1177px;top:481px;" width="13" height="8" viewBox="0 0 13 8" fill="none"><path d="M1 1 L6.5 6.5 L12 1" stroke="#2b2d33" stroke-width="1.2"/></svg>
<div class="t" style="left:387.18px;top:518.66px;font-size:12.8px;line-height:12.8px;color:#23262f;letter-spacing:-0.042px;transform:scaleX(0.9933);transform-origin:1.02px 0;">Lists</div>
<div class="t" style="left:539.64px;top:518.66px;font-size:12.8px;line-height:12.8px;color:#23262f;letter-spacing:0.367px;transform:scaleX(1.0436);transform-origin:0.26px 0;">Tags</div>
<div class="t" style="left:690.96px;top:518.66px;font-size:12.8px;line-height:12.8px;color:#23262f;letter-spacing:0.362px;transform:scaleX(1.0519);transform-origin:0.64px 0;">Created</div>
<div class="b" style="left:388px;top:537px;width:140px;height:33px;border:1px solid #dfe1e5;border-radius:4px;box-sizing:border-box;background:#fff"></div>
<div class="b" style="left:540px;top:537px;width:140px;height:33px;border:1px solid #dfe1e5;border-radius:4px;box-sizing:border-box;background:#fff"></div>
<div class="b" style="left:692px;top:537px;width:112px;height:33px;border:1px solid #dfe1e5;border-radius:4px;box-sizing:border-box;background:#fff"></div>
<div class="b" style="left:845px;top:537px;width:112px;height:33px;border:1px solid #dfe1e5;border-radius:4px;box-sizing:border-box;background:#fff"></div>
<svg class="b" style="left:808px;top:545px;" width="16" height="17" viewBox="0 0 16 17" fill="none"><rect x="1.6" y="2.3" width="13" height="13.1" stroke="#111" stroke-width="1.15"/><path d="M1.6 5.2 H14.6" stroke="#333" stroke-width="1"/><path d="M4.1 0.8 V3.2 M11.9 0.8 V3.2" stroke="#111" stroke-width="1.1"/><circle cx="6.5" cy="7.5" r="0.75" fill="#111"/><circle cx="9.2" cy="7.5" r="0.75" fill="#111"/><circle cx="11.9" cy="7.5" r="0.75" fill="#111"/><circle cx="3.7" cy="10.4" r="0.75" fill="#111"/><circle cx="6.5" cy="10.4" r="0.75" fill="#111"/><circle cx="9.2" cy="10.4" r="0.75" fill="#111"/><circle cx="11.9" cy="10.4" r="0.75" fill="#111"/><circle cx="3.7" cy="13" r="0.75" fill="#111"/><circle cx="6.5" cy="13" r="0.75" fill="#111"/><circle cx="9.2" cy="13" r="0.75" fill="#111"/></svg>
<div class="b" style="left:833.6px;top:553px;width:6px;height:1.4px;background:#666"></div>
<svg class="b" style="left:961.5px;top:545px;" width="16" height="17" viewBox="0 0 16 17" fill="none"><rect x="1.6" y="2.3" width="13" height="13.1" stroke="#111" stroke-width="1.15"/><path d="M1.6 5.2 H14.6" stroke="#333" stroke-width="1"/><path d="M4.1 0.8 V3.2 M11.9 0.8 V3.2" stroke="#111" stroke-width="1.1"/><circle cx="6.5" cy="7.5" r="0.75" fill="#111"/><circle cx="9.2" cy="7.5" r="0.75" fill="#111"/><circle cx="11.9" cy="7.5" r="0.75" fill="#111"/><circle cx="3.7" cy="10.4" r="0.75" fill="#111"/><circle cx="6.5" cy="10.4" r="0.75" fill="#111"/><circle cx="9.2" cy="10.4" r="0.75" fill="#111"/><circle cx="11.9" cy="10.4" r="0.75" fill="#111"/><circle cx="3.7" cy="13" r="0.75" fill="#111"/><circle cx="6.5" cy="13" r="0.75" fill="#111"/><circle cx="9.2" cy="13" r="0.75" fill="#111"/></svg>
<div class="t" style="left:393.30px;top:589.90px;font-size:15px;line-height:15px;color:#7a85b0;letter-spacing:0.618px;transform:scaleX(1.0512);transform-origin:1.20px 0;-webkit-text-stroke:0.3px #7a85b0;">Name</div>
<div class="t" style="left:618.95px;top:589.90px;font-size:15px;line-height:15px;color:#7a85b0;letter-spacing:0.326px;transform:scaleX(1.0395);transform-origin:0.75px 0;-webkit-text-stroke:0.3px #7a85b0;">Category</div>
<div class="t" style="left:801.35px;top:589.90px;font-size:15px;line-height:15px;color:#7a85b0;letter-spacing:0.348px;transform:scaleX(1.0420);transform-origin:0.75px 0;-webkit-text-stroke:0.3px #7a85b0;">Country</div>
<div class="t" style="left:940.62px;top:589.90px;font-size:15px;line-height:15px;color:#7a85b0;letter-spacing:0.269px;transform:scaleX(1.0330);transform-origin:0.67px 0;-webkit-text-stroke:0.3px #7a85b0;">State</div>
<div class="t" style="left:1068.85px;top:589.90px;font-size:15px;line-height:15px;color:#7a85b0;letter-spacing:0.266px;transform:scaleX(1.0329);transform-origin:0.75px 0;-webkit-text-stroke:0.3px #7a85b0;">City</div>
<div class="t" style="left:1213.33px;top:589.90px;font-size:15px;line-height:15px;color:#7a85b0;letter-spacing:0.212px;transform:scaleX(1.0236);transform-origin:0.67px 0;-webkit-text-stroke:0.3px #7a85b0;">Source</div>
<div class="b" style="left:388px;top:614px;width:917px;height:14px;background:#f3f6f9"></div>
<div class="b" style="left:388px;top:628px;width:917px;height:1px;background:#e6e9ee"></div>
<div class="b" style="left:388px;top:664px;width:917px;height:36.5px;background:#f3f6f9"></div>
<div class="b" style="left:388px;top:663.5px;width:917px;height:1px;background:#e6e9ee"></div>
<div class="b" style="left:388px;top:700px;width:917px;height:1px;background:#e6e9ee"></div>
<div class="t" style="left:393.33px;top:639.64px;font-size:14.6px;line-height:14.6px;color:#3143ca;letter-spacing:0.016px;">Nakano Takuya</div>
<div class="t" style="left:618.73px;top:639.64px;font-size:14.6px;line-height:14.6px;color:#8c9099;letter-spacing:0.222px;transform:scaleX(1.0245);transform-origin:1.17px 0;">Nurse</div>
<div class="t" style="left:801.20px;top:639.64px;font-size:14.6px;line-height:14.6px;color:#3143ca;letter-spacing:0.105px;transform:scaleX(1.0136);transform-origin:1.09px 0;">United Kingdom</div>
<div class="t" style="left:1068.63px;top:639.64px;font-size:14.6px;line-height:14.6px;color:#3143ca;letter-spacing:0.160px;transform:scaleX(1.0229);transform-origin:1.17px 0;">Liverpool</div>
<div class="t" style="left:394.21px;top:675.94px;font-size:14.6px;line-height:14.6px;color:#3143ca;letter-spacing:0.010px;">Takada Yuito</div>
<div class="t" style="left:618.73px;top:675.94px;font-size:14.6px;line-height:14.6px;color:#8c9099;letter-spacing:0.165px;transform:scaleX(1.0234);transform-origin:1.17px 0;">Multimedia animator</div>
<div class="t" style="left:801.20px;top:675.94px;font-size:14.6px;line-height:14.6px;color:#3143ca;letter-spacing:0.022px;">United States</div>
<div class="t" style="left:1068.63px;top:675.94px;font-size:14.6px;line-height:14.6px;color:#3143ca;letter-spacing:-0.055px;transform:scaleX(0.9930);transform-origin:1.17px 0;">Los Angeles</div>
<div class="t" style="left:393.33px;top:712.14px;font-size:14.6px;line-height:14.6px;color:#3143ca;letter-spacing:-0.037px;">Frances White</div>
<div class="t" style="left:618.73px;top:712.14px;font-size:14.6px;line-height:14.6px;color:#8c9099;letter-spacing:0.222px;transform:scaleX(1.0245);transform-origin:1.17px 0;">Nurse</div>
<div class="t" style="left:801.20px;top:712.14px;font-size:14.6px;line-height:14.6px;color:#3143ca;letter-spacing:0.022px;">United States</div>
<div class="t" style="left:1068.63px;top:712.14px;font-size:14.6px;line-height:14.6px;color:#3143ca;letter-spacing:-0.055px;transform:scaleX(0.9930);transform-origin:1.17px 0;">Los Angeles</div>
<svg class="b" style="left:424px;top:614.5px;" width="12" height="5" viewBox="0 0 12 5" fill="none"><path d="M1.5 -0.5 Q5 4.5 9.5 -0.5" stroke="#3143ca" stroke-width="1.4"/></svg>
<svg class="b" style="left:869px;top:614.5px;" width="12" height="5" viewBox="0 0 12 5" fill="none"><path d="M1.5 -0.5 Q5 4.5 9.5 -0.5" stroke="#3143ca" stroke-width="1.4"/></svg>
<svg class="b" style="left:1112px;top:614.5px;" width="12" height="5" viewBox="0 0 12 5" fill="none"><path d="M1.5 -0.5 Q5 4.5 9.5 -0.5" stroke="#3143ca" stroke-width="1.4"/></svg>
<div class="b" style="left:684.5px;top:614.5px;width:1.3px;height:4px;background:#8c9099"></div>
<div class="b" style="left:388px;top:725px;width:917px;height:7px;background:#e3e7ee"></div>
<div class="b" style="left:388px;top:725px;width:544px;height:7px;background:#c5cad4;border-radius:3px"></div>
<div class="b" style="left:1305px;top:614px;width:7px;height:111px;background:#e3e7ee"></div>
<div class="b" style="left:1305px;top:635px;width:7px;height:17px;background:#c5cad4;border-radius:3px"></div>
<div class="b" style="left:374px;top:732px;width:930px;height:30px;background:#fff"></div>
<svg class="b" style="left:1234px;top:741px;" width="14" height="16" viewBox="0 0 14 16" fill="none"><path d="M1 1.3 H13 L8.3 7.6 V13.5 L5.7 14.8 V7.6 Z" stroke="#111" stroke-width="1.4" stroke-linejoin="round"/></svg>
<div class="t" style="left:1250.12px;top:740.64px;font-size:14.6px;line-height:14.6px;color:#1e1f26;letter-spacing:0.284px;transform:scaleX(1.0551);transform-origin:0.58px 0;">edit filter</div>
<div class="b" style="left:489px;top:766px;width:52px;height:5px;border-top:1px solid #dfe1e5;border-radius:4px 4px 0 0"></div>
<div class="b" style="left:1229px;top:765px;width:82px;height:5px;border-top:1px solid #dfe1e5;border-radius:4px 4px 0 0"></div>
</body></html>
